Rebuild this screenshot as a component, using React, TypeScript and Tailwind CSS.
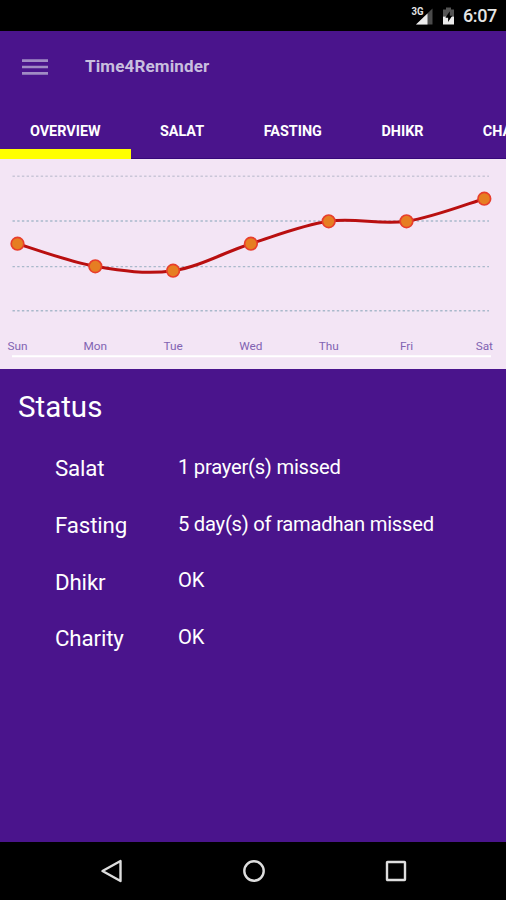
const tabs = [
  { label: 'OVERVIEW', width: 'w-[130.5px]', active: true },
  { label: 'SALAT', width: 'w-[103px]', active: false },
  { label: 'FASTING', width: 'w-[118.5px]', active: false },
  { label: 'DHIKR', width: 'w-[101px]', active: false },
  { label: 'CHARITY', width: 'w-[120px]', active: false },
];

const points = [
  { day: 'Sun', x: 17.5, y: 84.7 },
  { day: 'Mon', x: 95.3, y: 107.3 },
  { day: 'Tue', x: 173.1, y: 111.7 },
  { day: 'Wed', x: 250.9, y: 84.7 },
  { day: 'Thu', x: 328.7, y: 62.3 },
  { day: 'Fri', x: 406.5, y: 62.3 },
  { day: 'Sat', x: 484.3, y: 39.7 },
];

const rows = [
  { name: 'Salat', value: '1 prayer(s) missed' },
  { name: 'Fasting', value: '5 day(s) of ramadhan missed' },
  { name: 'Dhikr', value: 'OK' },
  { name: 'Charity', value: 'OK' },
];

/* Cubic spline through the points, tangents taken from the neighbours. */
function curve() {
  let d = `M${points[0].x} ${points[0].y}`;
  for (let i = 0; i < points.length - 1; i++) {
    const p0 = points[Math.max(i - 1, 0)];
    const p1 = points[i];
    const p2 = points[i + 1];
    const p3 = points[Math.min(i + 2, points.length - 1)];
    const k = 0.17;
    d += ` C${p1.x + (p2.x - p0.x) * k} ${p1.y + (p2.y - p0.y) * k} ${p2.x - (p3.x - p1.x) * k} ${p2.y - (p3.y - p1.y) * k} ${p2.x} ${p2.y}`;
  }
  return d;
}

function StatusBar() {
  return (
    <div className="flex h-[31px] shrink-0 items-center justify-end bg-black pt-px pr-[9px] text-[#e4e4e4]">
      <svg width="23" height="20" viewBox="0 0 23 20" className="mr-2">
        <path d="M21.5 2.5V18.5H5Z" fill="#4a4a4a" />
        <path d="M16.5 7.5V18.5H5Z" fill="#ececec" />
        <text x="0.5" y="9" fontSize="10" fontWeight="700" fill="#e4e4e4" stroke="#000" strokeWidth="1.5" paintOrder="stroke" textLength="12" lengthAdjust="spacingAndGlyphs">3G</text>
      </svg>
      <svg width="13" height="18" viewBox="0 0 13 18" className="mr-[8px]">
        <path d="M4 0.5H9V2.5H12V9.5H1V2.5H4Z" fill="#555" />
        <path d="M1 9.5H12V17.5H1Z" fill="#ececec" />
        <path d="M7.8 4.2L3.4 10.8H6.1V15L10.2 8.8H7.8Z" fill="#000" />
      </svg>
      <span className="text-[18px] leading-none font-medium tracking-[-0.35px]">6:07</span>
    </div>
  );
}

function Chart() {
  return (
    <svg width="506" height="210" viewBox="0 0 506 210" className="block shrink-0 bg-[#f3e5f5]">
      <g stroke="#a9b9cb" strokeWidth="1.4" strokeDasharray="2.4 2.3">
        <path d="M12.5 17.2H489" stroke="#c9c6d8" />
        <path d="M12.5 62H489" />
        <path d="M12.5 107.6H489" />
        <path d="M12.5 151.7H489" />
      </g>
      <path d="M12 197.2H491" stroke="#fff" strokeWidth="2" />
      <path d={curve()} fill="none" stroke="#b90f10" strokeWidth="3" />
      {points.map((p) => (
        <circle key={p.day} cx={p.x} cy={p.y} r="6.3" fill="#e67e22" stroke="#e83e2c" strokeWidth="1.7" />
      ))}
      {points.map((p) => (
        <text key={p.day} x={p.x} y="191" textAnchor="middle" fontSize="11.8" fill="#8163b2">
          {p.day}
        </text>
      ))}
    </svg>
  );
}

export default function App() {
  return (
    <div className="flex h-[900px] w-[506px] flex-col overflow-hidden bg-[#4a148c] font-['Roboto',sans-serif] text-white">
      <StatusBar />
      <header className="flex h-[71px] shrink-0 items-center pl-[22px]">
        <svg width="26" height="18" viewBox="0 0 26 18" fill="none" stroke="#a08bc4" strokeWidth="2.6">
          <path d="M0 2.6H26M0 9H26M0 15.4H26" />
        </svg>
        <h1 className="ml-[37px] text-[17px] leading-none font-bold tracking-[0.15px] text-[#c9bfdf]">Time4Reminder</h1>
      </header>
      <nav className="flex h-[57px] shrink-0 overflow-hidden">
        {tabs.map((t) => (
          <div key={t.label} className={`${t.width} flex shrink-0 flex-col justify-between`}>
            <span className="mt-[22px] text-center text-[14.4px] leading-[16px] font-bold">{t.label}</span>
            <span className={t.active ? 'h-[10px] bg-[#ffff00]' : 'h-[1.5px] bg-[#36087a]'} />
          </div>
        ))}
      </nav>
      <Chart />
      <main className="flex-1 pt-[18px]">
        <h2 className="pl-[18px] text-[29.5px] leading-[40px]">Status</h2>
        <div className="mt-[13px] pl-[55px]">
          {rows.map((r) => (
            <div key={r.name} className="flex h-[56.7px] items-center">
              <span className="w-[123px] text-[22.3px] leading-[28px] tracking-[-0.15px]">{r.name}</span>
              <span className="pb-[3px] text-[20.2px] leading-[28px] tracking-[-0.24px]">{r.value}</span>
            </div>
          ))}
        </div>
      </main>
      <footer className="flex h-[58px] shrink-0 items-center justify-between bg-black pr-[98px] pl-[100px]">
        <svg width="24" height="26" viewBox="0 0 24 26" fill="none" stroke="#dedede" strokeWidth="2.4">
          <path d="M20.5 3V23L2.5 13Z" strokeLinejoin="round" />
        </svg>
        <svg width="24" height="24" viewBox="0 0 24 24" fill="none" stroke="#dedede" strokeWidth="2.4">
          <circle cx="12" cy="12" r="9.7" />
        </svg>
        <svg width="24" height="24" viewBox="0 0 24 24" fill="none" stroke="#dedede" strokeWidth="2.4">
          <rect x="3" y="3" width="18" height="18" rx="0.5" />
        </svg>
      </footer>
    </div>
  );
}
